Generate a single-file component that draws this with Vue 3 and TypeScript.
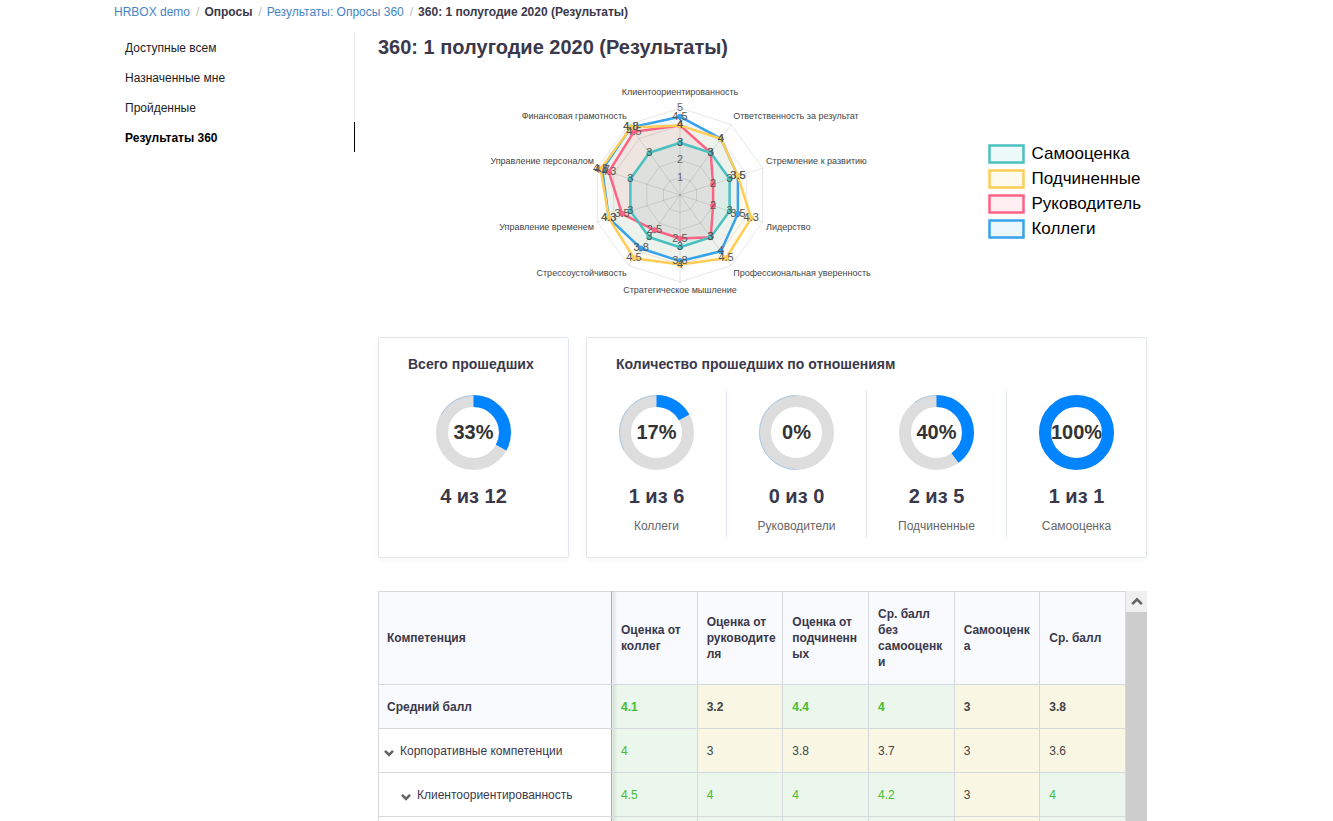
<script setup lang="ts">
interface Series {
  name: string
  color: string
  fill: string
  values: number[]
}

interface Row {
  label: string
  kind: 'total' | 'group' | 'child'
  values: number[]
}

const menu = ['Доступные всем', 'Назначенные мне', 'Пройденные', 'Результаты 360']

const axes = [
  'Клиентоориентированность',
  'Ответственность за результат',
  'Стремление к развитию',
  'Лидерство',
  'Профессиональная уверенность',
  'Стратегическое мышление',
  'Стрессоустойчивость',
  'Управление временем',
  'Управление персоналом',
  'Финансовая грамотность',
]

const series: Series[] = [
  { name: 'Самооценка', color: '#4bc0c0', fill: 'rgba(75,192,192,0.1)', values: [3, 3, 3, 3, 3, 3, 3, 3, 3, 3] },
  { name: 'Подчиненные', color: '#ffcd56', fill: 'rgba(255,205,86,0.1)', values: [4, 4, 3.5, 4.3, 4.5, 4, 4.5, 4.3, 4.8, 4.8] },
  { name: 'Руководитель', color: '#ff6384', fill: 'rgba(255,99,132,0.1)', values: [4, 3, 2, 2, 3, 2.5, 2.5, 3.5, 4.3, 4.5] },
  { name: 'Коллеги', color: '#36a2eb', fill: 'rgba(54,162,235,0.1)', values: [4.5, 4, 3.5, 3.5, 4, 3.8, 3.8, 4.3, 4.7, 4.8] },
]
const layers = [...series].reverse()

const CX = 202
const CY = 117
const STEP = 17.4

function point(axis: number, value: number) {
  const a = (axis * Math.PI) / 5
  return { x: CX + Math.sin(a) * STEP * value, y: CY - Math.cos(a) * STEP * value }
}

function polygon(values: number[]): string {
  return values.map((v, i) => { const p = point(i, v); return `${p.x.toFixed(1)},${p.y.toFixed(1)}` }).join(' ')
}

const rings = [1, 2, 3, 4, 5].map((v) => polygon(axes.map(() => v)))

const labelRise = [-100, -76, -31, 35, 81, 98, 81, 35, -31, -76]
const axisLabels = axes.map((text, i) => {
  const anchor = i === 0 || i === 5 ? 'middle' : i < 5 ? 'start' : 'end'
  return { text, x: point(i, 5.2).x, y: CY + labelRise[i], anchor }
})

const relations = [
  { percent: 17, count: '1 из 6', name: 'Коллеги' },
  { percent: 0, count: '0 из 0', name: 'Руководители' },
  { percent: 40, count: '2 из 5', name: 'Подчиненные' },
  { percent: 100, count: '1 из 1', name: 'Самооценка' },
]

const columns = ['Оценка от коллег', 'Оценка от руководителя', 'Оценка от подчиненных', 'Ср. балл без самооценки', 'Самооценка', 'Ср. балл']

const rows: Row[] = [
  { label: 'Средний балл', kind: 'total', values: [4.1, 3.2, 4.4, 4, 3, 3.8] },
  { label: 'Корпоративные компетенции', kind: 'group', values: [4, 3, 3.8, 3.7, 3, 3.6] },
  { label: 'Клиентоориентированность', kind: 'child', values: [4.5, 4, 4, 4.2, 3, 4] },
]
const pendingRow = ['good', 'good', 'good', 'good', 'fair', 'good']
</script>

<template>
  <div class="page">
    <nav class="crumbs" aria-label="Навигация">
      <a href="#">HRBOX demo</a><span class="sep">/</span><b>Опросы</b><span class="sep">/</span><a href="#">Результаты: Опросы 360</a><span class="sep">/</span><b>360: 1 полугодие 2020 (Результаты)</b>
    </nav>
    <div class="layout">
      <nav class="side" aria-label="Опросы">
        <a v-for="(m, i) in menu" :key="m" href="#" :class="{ active: i === 3 }">{{ m }}</a>
      </nav>
      <main>
        <h1>360: 1 полугодие 2020 (Результаты)</h1>
        <section class="chart">
          <svg class="radar" width="404" height="240" viewBox="0 0 404 240" role="img" aria-label="Диаграмма компетенций">
            <polygon v-for="s in layers" :key="s.name + 'f'" :points="polygon(s.values)" :fill="s.fill" />
            <g class="grid">
              <polygon v-for="r in rings" :key="r" :points="r" />
              <line v-for="(a, i) in axes" :key="a" :x1="CX" :y1="CY" :x2="point(i, 5).x" :y2="point(i, 5).y" />
            </g>
            <g class="ticks">
              <text v-for="t in 5" :key="t" :x="CX" :y="CY - t * STEP + 3">{{ t }}</text>
            </g>
            <g v-for="s in layers" :key="s.name" :stroke="s.color" :fill="s.color">
              <polygon :points="polygon(s.values)" fill="none" stroke-width="2.5" stroke-linejoin="round" />
              <circle v-for="(v, i) in s.values" :key="i" :cx="point(i, v).x" :cy="point(i, v).y" r="2.5" />
            </g>
            <g class="marks">
              <template v-for="s in layers" :key="s.name">
                <text v-for="(v, i) in s.values" :key="i" :x="point(i, v).x" :y="point(i, v).y + 3">{{ v }}</text>
              </template>
            </g>
            <g class="axis-labels">
              <text v-for="l in axisLabels" :key="l.text" :x="l.x" :y="l.y" :text-anchor="l.anchor">{{ l.text }}</text>
            </g>
          </svg>
          <ul class="legend">
            <li v-for="s in series" :key="s.name">
              <svg width="37" height="20" viewBox="0 0 37 20" aria-hidden="true">
                <rect x="1.5" y="1.5" width="34" height="17" :fill="s.fill" :stroke="s.color" stroke-width="2.5" />
              </svg>
              {{ s.name }}
            </li>
          </ul>
        </section>

        <section class="cards">
          <article class="card overall">
            <h2>Всего прошедших</h2>
            <div class="stat">
              <div class="donut">
                <svg width="75" height="75" viewBox="0 0 75 75" aria-hidden="true">
                  <circle class="track" cx="37.5" cy="37.5" r="31.5" />
                  <circle class="rim" cx="37.5" cy="37.5" r="37" pathLength="100" stroke-dasharray="17 100" stroke-dashoffset="-83" />
                  <circle class="value" cx="37.5" cy="37.5" r="31.5" pathLength="100" stroke-dasharray="33 100" />
                </svg>
                <span>33%</span>
              </div>
              <strong>4 из 12</strong>
            </div>
          </article>
          <article class="card by-relation">
            <h2>Количество прошедших по отношениям</h2>
            <div class="stats">
              <div v-for="r in relations" :key="r.name" class="stat">
                <div class="donut">
                  <svg width="75" height="75" viewBox="0 0 75 75" aria-hidden="true">
                    <circle class="track" cx="37.5" cy="37.5" r="31.5" />
                    <circle v-if="r.percent < 50" class="rim" cx="37.5" cy="37.5" r="37" pathLength="100" :stroke-dasharray="`${50 - r.percent} 100`" :stroke-dashoffset="-50 - r.percent" />
                    <circle v-if="r.percent" class="value" cx="37.5" cy="37.5" r="31.5" pathLength="100" :stroke-dasharray="`${r.percent} 100`" />
                  </svg>
                  <span>{{ r.percent }}%</span>
                </div>
                <strong>{{ r.count }}</strong>
                <small>{{ r.name }}</small>
              </div>
            </div>
          </article>
        </section>

        <section class="scores">
          <table>
            <colgroup>
              <col class="first" />
              <col v-for="c in columns" :key="c" />
            </colgroup>
            <thead>
              <tr>
                <th scope="col">Компетенция</th>
                <th v-for="c in columns" :key="c" scope="col">{{ c }}</th>
              </tr>
            </thead>
            <tbody>
              <tr v-for="row in rows" :key="row.label" :class="row.kind">
                <th scope="row">
                  <div class="name">
                    <button v-if="row.kind !== 'total'" type="button" :aria-label="'Свернуть: ' + row.label">
                      <svg width="10" height="8" viewBox="0 0 10 8" aria-hidden="true"><path d="M1 1.8 5 5.8 9 1.8" /></svg>
                    </button>
                    {{ row.label }}
                  </div>
                </th>
                <td v-for="(v, i) in row.values" :key="i" :class="v >= 4 ? 'good' : 'fair'">{{ v }}</td>
              </tr>
              <tr class="child">
                <th scope="row"></th>
                <td v-for="(level, i) in pendingRow" :key="i" :class="level"></td>
              </tr>
            </tbody>
          </table>
          <div class="scrollbar">
            <button type="button" aria-label="Прокрутить вверх">
              <svg width="12" height="9" viewBox="0 0 12 9" aria-hidden="true"><path d="M1.2 7.2 6 2.4 10.8 7.2" /></svg>
            </button>
          </div>
        </section>
      </main>
    </div>
  </div>
</template>

<style>
body {
  margin: 0;
  background: #fff;
  overflow: hidden;
}
</style>

<style scoped>
.page {
  box-sizing: border-box;
  height: 100vh;
  overflow: hidden;
  padding: 0 186px 0 114px;
  font-family: "Liberation Sans", Arial, sans-serif;
  font-size: 12px;
  color: #3a384b;
}
.crumbs {
  padding-top: 4px;
  line-height: 16px;
  white-space: nowrap;
}
.crumbs a {
  color: #4684c8;
  text-decoration: none;
}
.crumbs b {
  color: #3a384b;
}
.sep {
  padding: 0 5px 0 6px;
  color: #bbb;
}
.layout {
  display: flex;
  align-items: flex-start;
  padding-top: 12px;
}
.side {
  display: flex;
  flex-direction: column;
  flex: 0 0 241px;
}
.side a {
  padding: 2px 0 0 11px;
  border-right: 1px solid #e8e8e8;
  line-height: 28px;
  color: #1c1c24;
  text-decoration: none;
}
.side a.active {
  border-color: #000;
  color: #000;
  font-weight: bold;
}
main {
  flex: 1;
  min-width: 0;
  margin-left: 23px;
}
h1 {
  margin: 0;
  font-size: 20px;
  line-height: 30px;
}
.chart {
  display: flex;
  justify-content: space-between;
  padding: 16px 6px 0 100px;
}
.radar {
  overflow: visible;
  flex: none;
}
.grid {
  fill: none;
  stroke: rgba(0, 0, 0, 0.1);
}
.ticks,
.marks {
  font-size: 11px;
  text-anchor: middle;
  fill: #666;
}
.marks {
  fill: #555;
}
.axis-labels {
  font-size: 9px;
  fill: #444;
}
.legend {
  margin: 0;
  padding: 63px 0 0;
  list-style: none;
  font-size: 17px;
  color: #000;
}
.legend li {
  display: flex;
  align-items: center;
  gap: 6px;
  height: 25px;
}
.cards {
  display: flex;
  gap: 17px;
  margin-top: 19px;
}
.card {
  box-sizing: border-box;
  height: 221px;
  border: 1px solid #e1e6ec;
  border-radius: 2px;
  box-shadow: 0 2px 6px rgba(0, 0, 0, 0.04);
}
.overall {
  flex: 0 0 191px;
}
.by-relation {
  flex: 1;
}
h2 {
  margin: 0;
  padding: 16px 29px;
  font-size: 14px;
  line-height: 20px;
  white-space: nowrap;
}
.stats {
  display: flex;
}
.stats .stat {
  flex: 1;
}
.stats .stat + .stat {
  border-left: 1px solid #e1e6ec;
}
.stat {
  display: flex;
  flex-direction: column;
  align-items: center;
  height: 148px;
}
.donut {
  display: grid;
  place-items: center;
  margin-top: 5px;
  font-size: 20px;
  font-weight: bold;
  color: #333;
}
.donut > * {
  grid-area: 1 / 1;
}
.donut circle {
  fill: none;
  stroke-width: 12;
}
.donut .track {
  stroke: #ddd;
}
.donut .rim {
  stroke: #a9c8e8;
  stroke-width: 1;
}
.donut .value {
  stroke: #0084ff;
}
.value,
.rim {
  transform: rotate(-90deg);
  transform-origin: 37.5px 37.5px;
}
.stat strong {
  margin-top: 14px;
  font-size: 20px;
  line-height: 24px;
}
.stat small {
  margin-top: 10px;
  font-size: 12px;
  line-height: 16px;
  color: #666;
}
.scores {
  display: flex;
  margin-top: 33px;
}
table {
  width: 100%;
  table-layout: fixed;
  border-collapse: collapse;
}
.first {
  width: 233px;
}
th,
td {
  box-sizing: border-box;
  height: 44px;
  padding: 0 6px 0 9px;
  border: 1px solid #d5d8dc;
  text-align: left;
  line-height: 16px;
  overflow-wrap: anywhere;
}
thead th {
  height: 93px;
  background-color: #f9fafd;
}
th:first-child {
  padding-left: 8px;
  border-right-color: #a9abae;
}
th:nth-child(2),
td:nth-child(2) {
  background-image: linear-gradient(to right, rgba(0, 0, 0, 0.1), transparent 5px);
}
.total th {
  background-color: #f9fafd;
}
.total td {
  font-weight: bold;
}
.group th,
.child th {
  font-weight: normal;
}
.good {
  background-color: #ebf6ec;
  color: #46bd32;
}
.fair {
  background-color: #f9f6e3;
  color: #444;
}
.name {
  display: flex;
  align-items: center;
}
.group .name {
  margin-left: -3px;
}
.child .name {
  margin-left: 14px;
}
button {
  padding: 0;
  border: 0;
  background: none;
}
.name button {
  width: 16px;
  height: 12px;
  display: flex;
  align-items: flex-end;
}
path {
  fill: none;
  stroke: #646464;
  stroke-width: 2.6;
}
.scrollbar {
  flex: 0 0 21px;
  background: #cdcdcd;
}
.scrollbar button {
  display: grid;
  place-items: center;
  width: 100%;
  height: 21px;
  background: #f0f0f0;
}
</style>
